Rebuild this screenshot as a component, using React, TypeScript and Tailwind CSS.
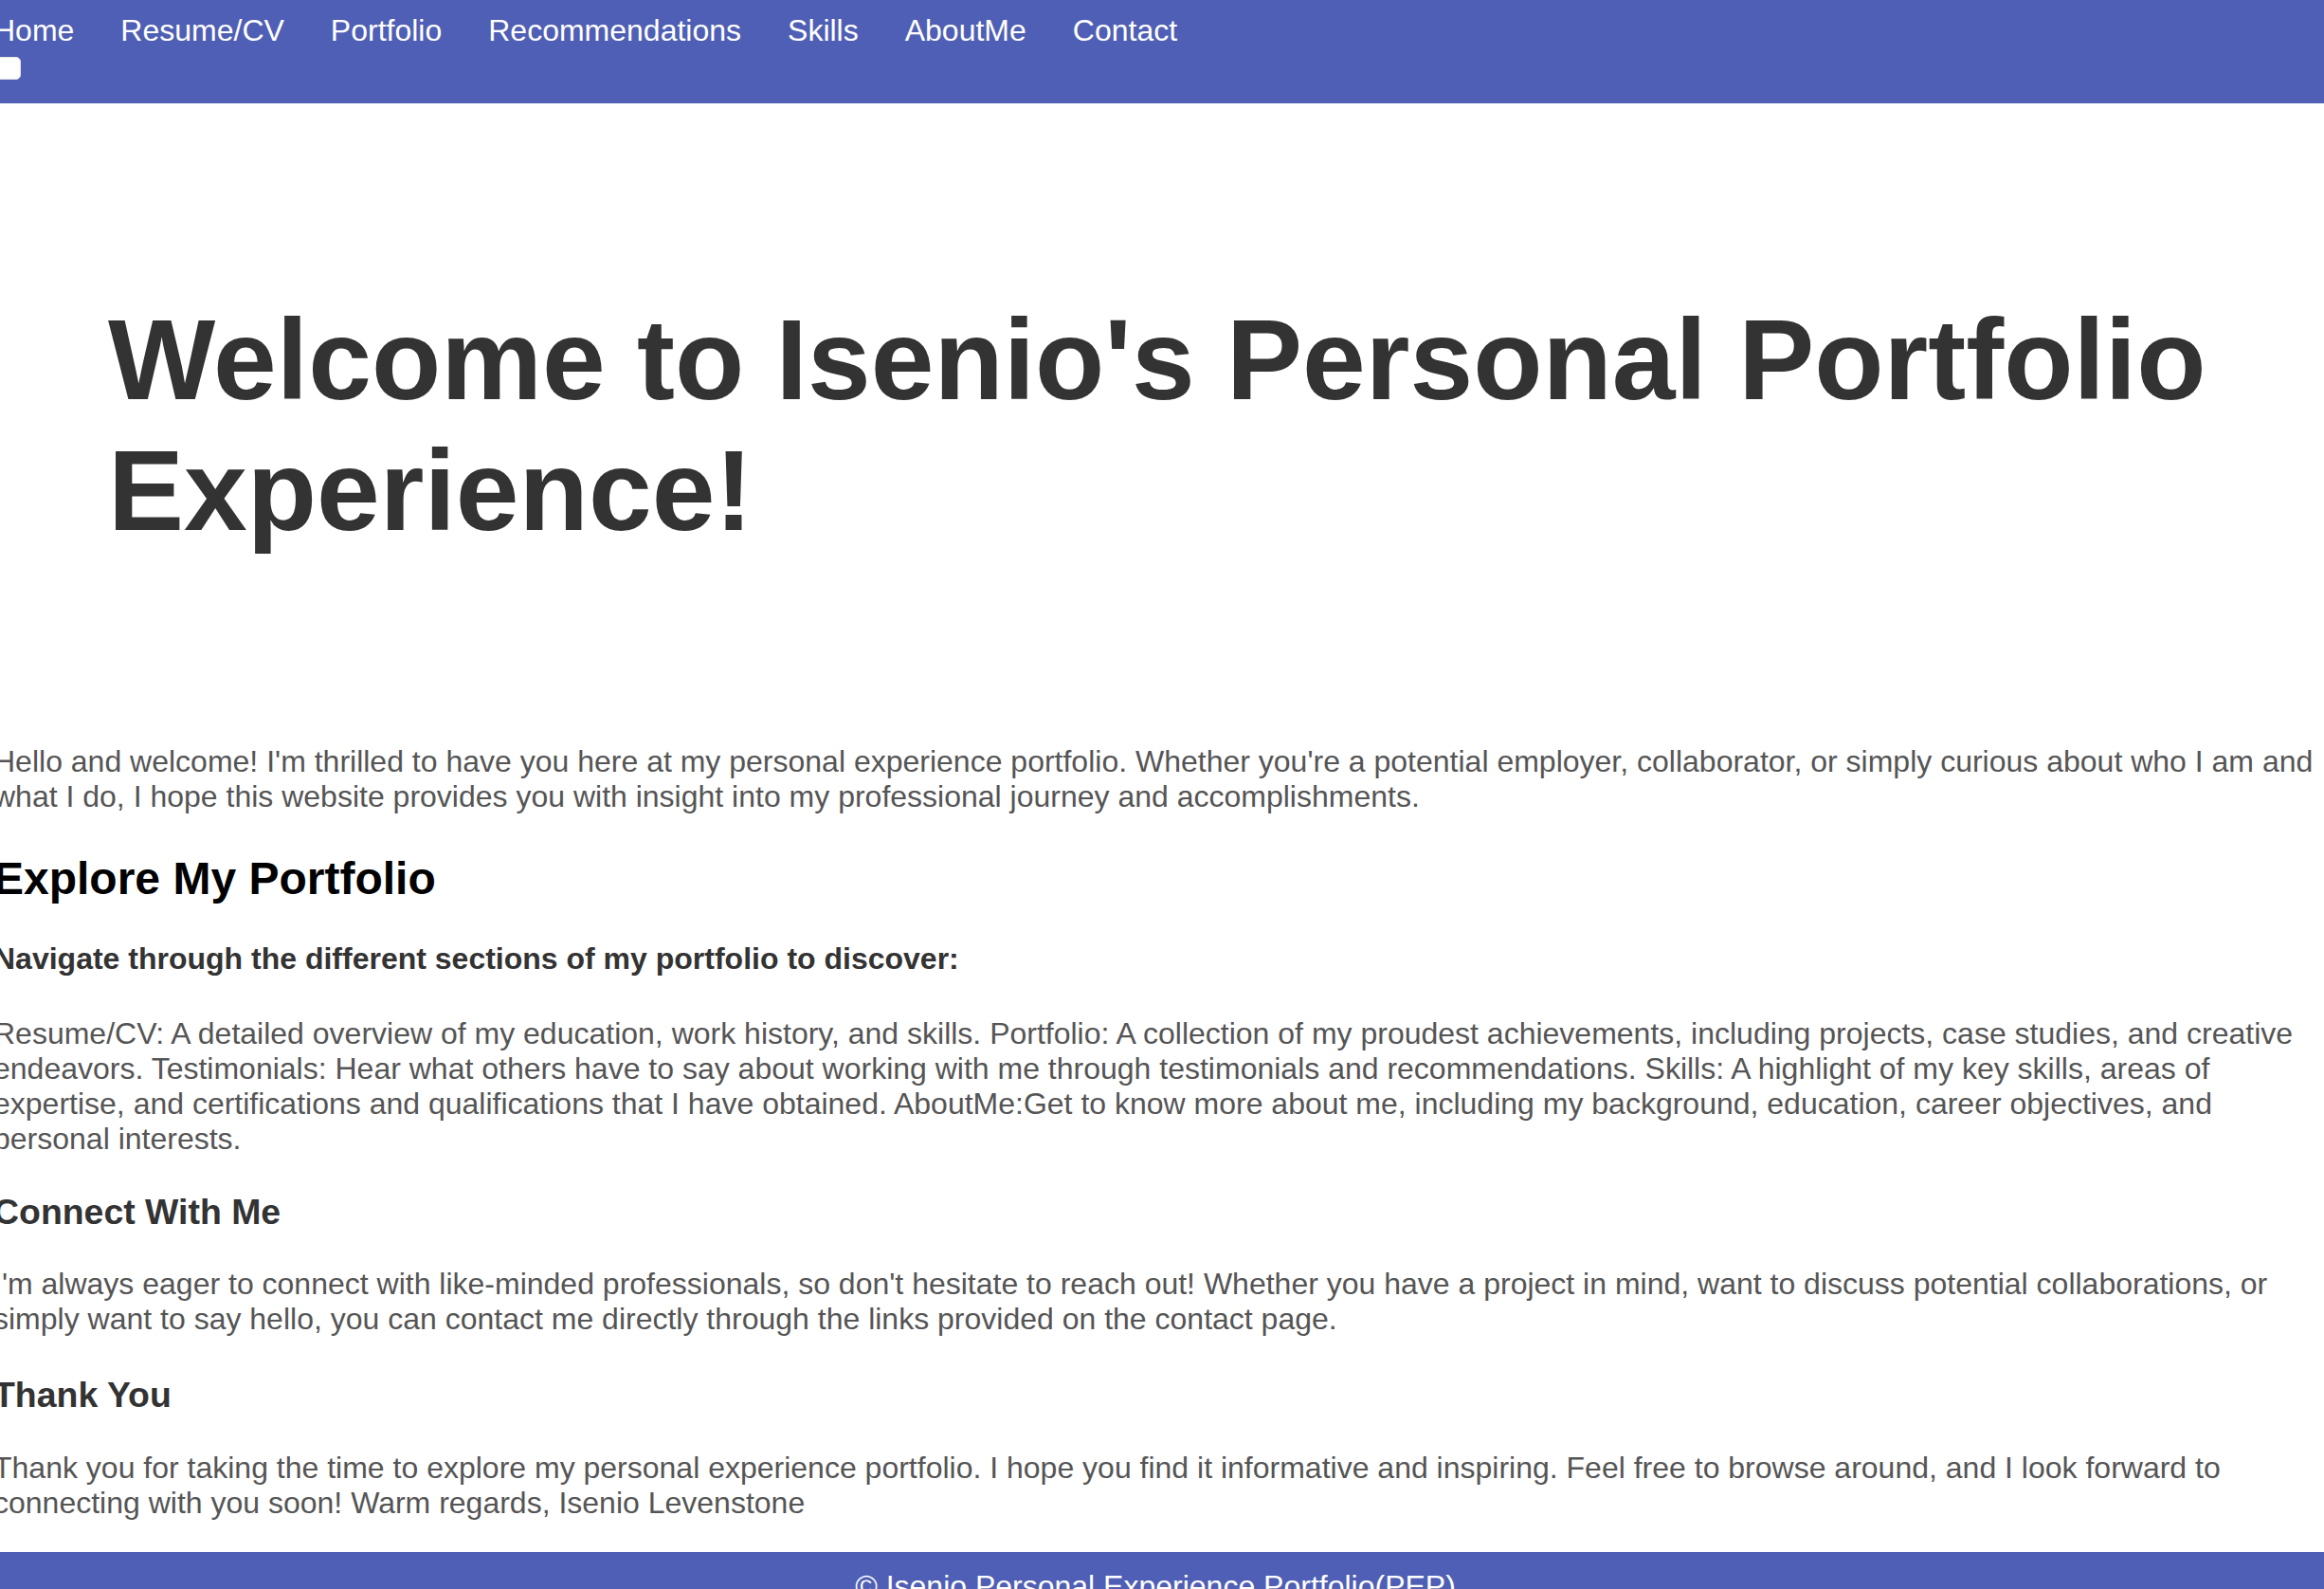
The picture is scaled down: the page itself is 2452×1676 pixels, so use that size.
const links = ['Home', 'Resume/CV', 'Portfolio', 'Recommendations', 'Skills', 'AboutMe', 'Contact']

export default function App() {
  return (
    <div className="min-h-screen bg-white font-['Liberation_Sans',Arial,Helvetica,sans-serif] text-[32px] leading-[normal] overflow-hidden">
      <nav className="h-[109px] bg-[#4f5fb5] pt-[14px]">
        <div className="-ml-[7px]">
          <ul className="flex gap-[49px] text-white">
            {links.map((l) => (
              <li key={l}>
                <a href="#">{l}</a>
              </li>
            ))}
          </ul>
          <div className="mt-[9px] ml-[3px] h-[24px] w-[26px] rounded-[5px] border border-[#e5e5e5] bg-white" />
        </div>
      </nav>

      <main className="-ml-[7px] w-[2452px] text-[#555]">
        <h1 className="pt-[201px] pb-[199px] pl-[121px] text-[120px] font-bold text-[#333]">
          Welcome to Isenio's Personal Portfolio Experience!
        </h1>

        <p className="mb-[40px]">
          Hello and welcome! I'm thrilled to have you here at my personal experience portfolio. Whether you're a
          potential employer, collaborator, or simply curious about who I am and what I do, I hope this website
          provides you with insight into my professional journey and accomplishments.
        </p>

        <h2 className="mb-[39px] text-[48px] font-bold text-black">Explore My Portfolio</h2>

        <h4 className="mb-[42px] font-bold text-[#333]">
          Navigate through the different sections of my portfolio to discover:
        </h4>

        <p className="mb-[37px]">
          Resume/CV: A detailed overview of my education, work history, and skills. Portfolio: A collection of my
          proudest achievements, including projects, case studies, and creative endeavors. Testimonials: Hear what
          others have to say about working with me through testimonials and recommendations. Skills: A highlight of
          my key skills, areas of expertise, and certifications and qualifications that I have obtained.
          AboutMe:Get to know more about me, including my background, education, career objectives, and personal
          interests.
        </p>

        <h3 className="mb-[36px] text-[37.44px] font-bold text-[#333]">Connect With Me</h3>

        <p className="mb-[40px]">
          I'm always eager to connect with like-minded professionals, so don't hesitate to reach out! Whether you
          have a project in mind, want to discuss potential collaborations, or simply want to say hello, you can
          contact me directly through the links provided on the contact page.
        </p>

        <h3 className="mb-[37px] text-[37.44px] font-bold text-[#333]">Thank You</h3>

        <p className="mb-[33px]">
          Thank you for taking the time to explore my personal experience portfolio. I hope you find it informative
          and inspiring. Feel free to browse around, and I look forward to connecting with you soon! Warm regards,
          Isenio Levenstone
        </p>
      </main>

      <footer className="bg-[#4f5fb5] py-[18px] text-center text-white">
        <p className="-ml-[14px]">© Isenio Personal Experience Portfolio(PEP)</p>
      </footer>
    </div>
  )
}
